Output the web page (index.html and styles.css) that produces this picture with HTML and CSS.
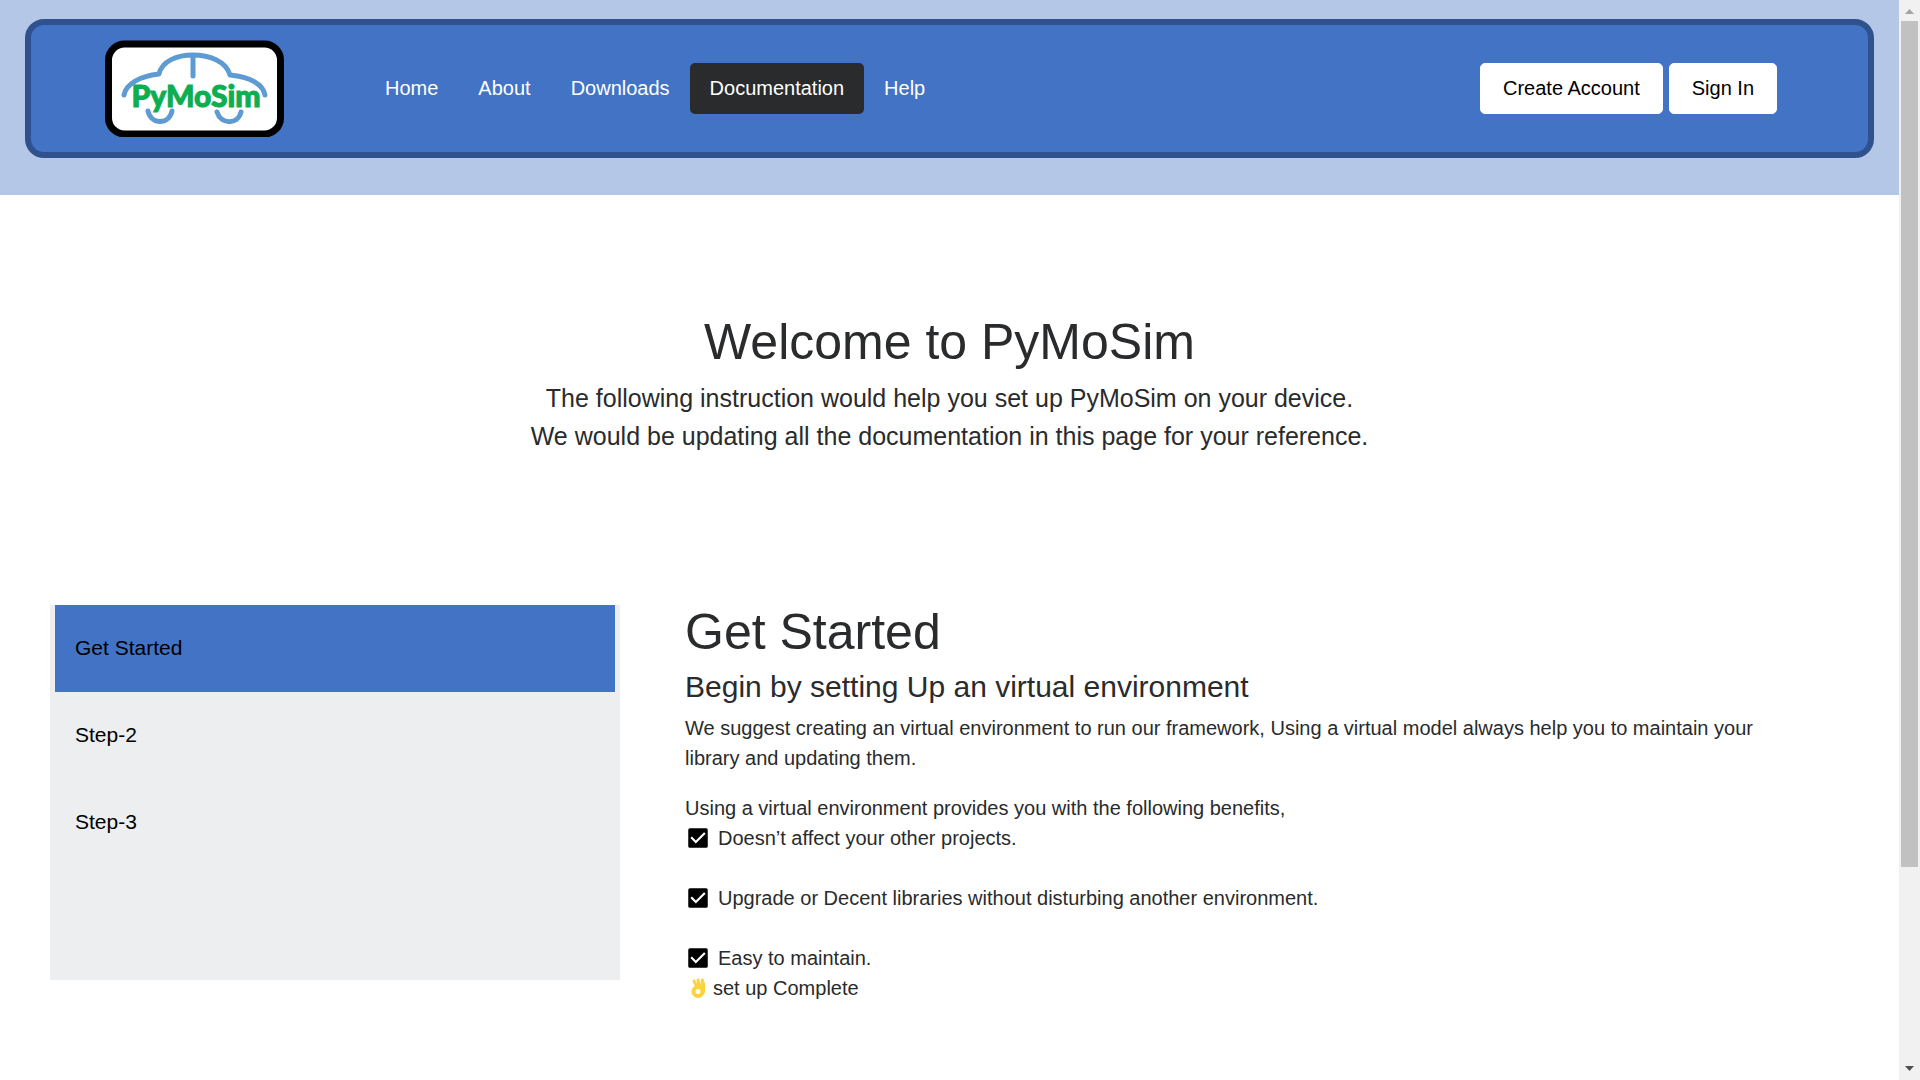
FILE: index.html
```
<!DOCTYPE html>
<html lang="en">
<head>
<meta charset="utf-8">
<title>PyMoSim - Documentation</title>
<link rel="stylesheet" href="styles.css">
</head>
<body>
<svg class="sprite" aria-hidden="true">
  <symbol id="check" viewBox="0 0 24 24">
    <path d="M19.500 3h-15A1.500 1.500 0 0 0 3 4.500v15A1.500 1.500 0 0 0 4.500 21h15a1.500 1.500 0 0 0 1.500-1.500v-15A1.500 1.500 0 0 0 19.500 3zM10 17l-5-5 1.400-1.400L10 14.200l7.600-7.600L19 8z"/>
  </symbol>
</svg>
<div class="page">
  <header class="header">
    <div class="navbar">
      <a class="logo" href="#" aria-label="PyMoSim home">
        <svg viewBox="0 0 179 97" width="179" height="97">
          <rect x="3.500" y="4" width="172" height="90" rx="16" fill="#fff" stroke="#000" stroke-width="7"/>
          <g fill="none" stroke="#5f9bd3" stroke-width="5" stroke-linecap="round" stroke-linejoin="round">
            <path d="M19 55C21 44 35 36 54 34C57 21 72 15 88 15S121 21 125 35C145 37 158 44 160 55M88 16V36"/>
            <path d="M43 71C46 85 64 85 67 71M112 72C116 85 133 85 136 72"/>
          </g>
          <text class="logo-text" x="91" y="67" text-anchor="middle">PyMoSim</text>
        </svg>
      </a>
      <nav class="nav">
        <a href="#">Home</a>
        <a href="#">About</a>
        <a href="#">Downloads</a>
        <a class="active" href="#">Documentation</a>
        <a href="#">Help</a>
      </nav>
      <div class="account">
        <button type="button">Create Account</button>
        <button type="button">Sign In</button>
      </div>
    </div>
  </header>
  <main>
    <section class="hero">
      <h1>Welcome to PyMoSim</h1>
      <p>The following instruction would help you set up PyMoSim on your device.<br>We would be updating all the documentation in this page for your reference.</p>
    </section>
    <div class="docs">
      <nav class="steps">
        <a class="active" href="#">Get Started</a>
        <a href="#">Step-2</a>
        <a href="#">Step-3</a>
      </nav>
      <article class="article">
        <h1>Get Started</h1>
        <h2>Begin by setting Up an virtual environment</h2>
        <p>We suggest creating an virtual environment to run our framework, Using a virtual model always help you to maintain your library and updating them.</p>
        <p class="intro">Using a virtual environment provides you with the following benefits,</p>
        <ul class="benefits">
          <li><svg class="icon"><use href="#check"/></svg>Doesn’t affect your other projects.</li>
          <li><svg class="icon"><use href="#check"/></svg>Upgrade or Decent libraries without disturbing another environment.</li>
          <li><svg class="icon"><use href="#check"/></svg>Easy to maintain.</li>
        </ul>
        <p class="done"><svg class="hand" viewBox="0 0 20 20">
          <g fill="none" stroke="#fdd33c" stroke-linecap="round">
            <path stroke-width="3" d="M5 3l3 6M9 2l1 6M13.500 2l-1 8M14.500 5v9"/>
            <circle cx="9" cy="13.500" r="4.500" stroke-width="4"/>
          </g>
        </svg>set up Complete</p>
      </article>
    </div>
  </main>
</div>
<div class="scrollbar" aria-hidden="true">
  <svg viewBox="0 0 21 21"><path d="M6 14h9l-4.500-5z" fill="#a3a3a3"/></svg>
  <div class="track"><div class="thumb"></div></div>
  <svg viewBox="0 0 21 21"><path d="M6 7h9l-4.500 5z" fill="#505050"/></svg>
</div>
</body>
</html>
```
FILE: styles.css
```
* {
  box-sizing: border-box;
}

body {
  display: grid;
  grid-template-columns: 1fr 21px;
  align-items: start;
  margin: 0;
  background: #fff;
  color: #292b2c;
  font: 20px/30px "Liberation Sans", Arial, sans-serif;
}

h1,
h2,
p,
ul {
  margin: 0;
  padding: 0;
}

h1,
h2 {
  font-weight: 400;
}

h1 {
  margin-bottom: 7px;
  font-size: 50px;
  line-height: 60px;
}

a {
  color: inherit;
  text-decoration: none;
}

.sprite {
  display: none;
}

.header {
  padding: 19px 25px 37px;
  background: #b4c7e7;
}

.navbar {
  display: flex;
  align-items: center;
  padding: 15px 91px 15px 74px;
  border: 6px solid #2f528f;
  border-radius: 19px;
  background: #4273c5;
}

.logo,
.logo svg {
  display: block;
}

.logo-text {
  fill: #0cae50;
  stroke: #0cae50;
  stroke-width: 1px;
  font: 900 30px Lato, sans-serif;
}

.nav {
  display: flex;
  margin-left: 81px;
  color: #fff;
}

.nav a {
  padding: 10px 20px 11px;
  border-radius: 5px;
}

.nav .active {
  background: #292b2c;
}

.account {
  display: flex;
  gap: 6px;
  margin-left: auto;
}

.account button {
  padding: 10px 22px;
  border: 1px solid #fff;
  border-radius: 5px;
  background: #fff;
  color: #000;
  font: inherit;
  line-height: 29px;
}

.hero {
  padding: 117px 40px 147px;
  text-align: center;
}

.hero p {
  font-size: 25px;
  line-height: 38px;
}

.docs {
  display: grid;
  grid-template-columns: 1fr 2fr;
  gap: 65px;
  align-items: start;
  padding: 0 74px 78px 50px;
}

.steps {
  margin-top: 3px;
  min-height: 375px;
  padding: 0 5px;
  background: #eceeef;
  color: #000;
  font-size: 21px;
}

.steps a {
  display: block;
  padding: 28px 20px 29px;
}

.steps .active {
  background: #4273c5;
}

.article {
  padding-right: 25px;
}

.article h2 {
  margin-bottom: 8px;
  font-size: 30px;
  line-height: 36px;
}

.article .intro {
  margin-top: 20px;
}

.benefits {
  display: grid;
  gap: 30px;
  list-style: none;
}

.benefits li,
.done {
  display: flex;
  align-items: center;
}

.icon {
  width: 26px;
  height: 26px;
  margin-right: 7px;
  fill: #000;
}

.hand {
  width: 20px;
  height: 20px;
  margin: 0 4px;
}

.scrollbar {
  position: sticky;
  top: 0;
  display: flex;
  flex-direction: column;
  height: 100vh;
  background: #f1f1f1;
}

.scrollbar svg {
  height: 21px;
}

.track {
  flex: 1;
  padding: 0 2px;
}

.thumb {
  height: 81.5%;
  background: #c1c1c1;
}
```
